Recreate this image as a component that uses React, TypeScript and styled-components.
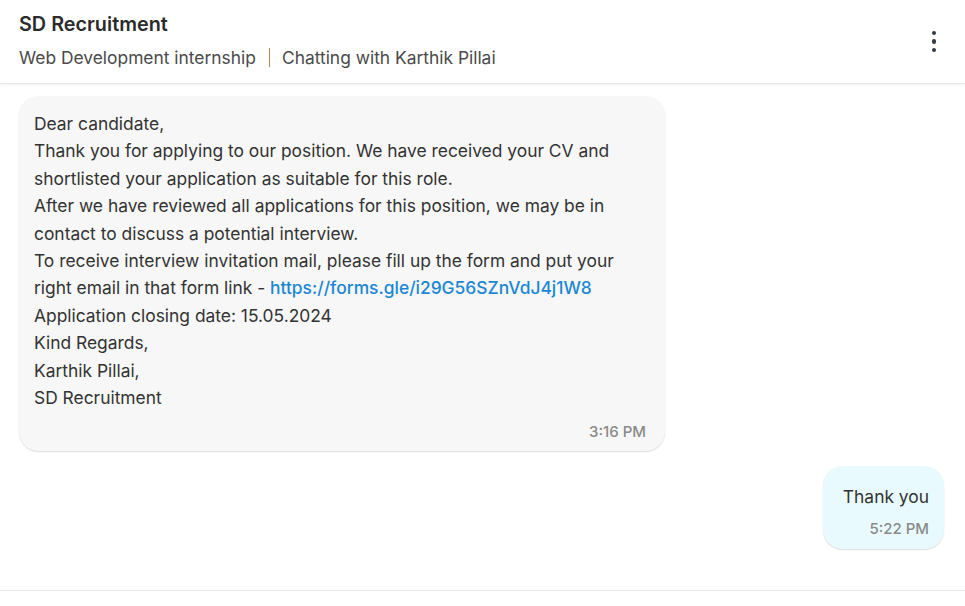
import React from "react";
import styled, { createGlobalStyle } from "styled-components";

const Global = createGlobalStyle`
  html, body { margin: 0; padding: 0; background: #ffffff; }
  body { font-family: Inter, "Noto Sans", sans-serif; color: #333333; }
  * { box-sizing: border-box; }
`;

const Page = styled.div`
  width: 965px;
  height: 606px;
  display: flex;
  flex-direction: column;
  background: #ffffff;
  overflow: hidden;
`;

const Header = styled.header`
  height: 84px;
  flex: none;
  display: flex;
  align-items: center;
  justify-content: space-between;
  padding: 0 19px 0 19px;
  border-bottom: 1px solid #e6e6e6;
  box-shadow: 0 1px 3px rgba(0, 0, 0, 0.06);
`;

const HeaderText = styled.div`
  display: flex;
  flex-direction: column;
  gap: 11px;
  margin-top: -3px;
`;

const Title = styled.h1`
  margin: 0;
  font-size: 19.8px;
  font-weight: 600;
  line-height: 24px;
  color: #2b2b2b;
`;

const Subtitle = styled.div`
  font-size: 17.4px;
  line-height: 22px;
  color: #4a4a4a;
  display: flex;
  align-items: center;
`;

const Sep = styled.span`
  display: inline-block;
  width: 1px;
  height: 19px;
  background: #b58a4c;
  margin: 0 12px 0 13px;
`;

const MenuButton = styled.button`
  border: none;
  background: transparent;
  padding: 0;
  width: 20px;
  height: 28px;
  display: flex;
  flex-direction: column;
  align-items: center;
  justify-content: center;
  gap: 4px;
  margin-right: 2px;
  cursor: pointer;
`;

const Dot = styled.span`
  width: 4.6px;
  height: 4.6px;
  border-radius: 50%;
  background: #333a44;
`;

const List = styled.main`
  height: 507px;
  flex: none;
  display: flex;
  flex-direction: column;
  gap: 15px;
  padding: 12px 21px 0 19px;
  border-bottom: 1px solid #e8e8e8;
`;

const Row = styled.div<{ $mine?: boolean }>`
  display: flex;
  justify-content: ${(p) => (p.$mine ? "flex-end" : "flex-start")};
`;

const Bubble = styled.div<{ $mine?: boolean }>`
  max-width: 646px;
  background: ${(p) => (p.$mine ? "#e8fafe" : "#f7f7f7")};
  border-radius: 20px;
  box-shadow: 0 1px 1.5px rgba(0, 0, 0, 0.14);
  padding: ${(p) => (p.$mine ? "17px 15px 11px 20px" : "14px 19px 10px 15px")};
  display: flex;
  flex-direction: column;
`;

const Body = styled.div<{ $mine?: boolean }>`
  font-size: 17.4px;
  line-height: 27.4px;
  color: #333333;
  white-space: pre-wrap;
  text-align: ${(p) => (p.$mine ? "right" : "left")};
`;

const Link = styled.a`
  color: #1b87d6;
  text-decoration: none;
  font-weight: 500;
`;

const Time = styled.div<{ $gap: number }>`
  align-self: flex-end;
  font-size: 15px;
  line-height: 18px;
  font-weight: 500;
  color: #8a8a8a;
  margin-top: ${(p) => p.$gap}px;
`;

export default function App() {
  return (
    <Page>
      <Global />
      <Header>
        <HeaderText>
          <Title>SD Recruitment</Title>
          <Subtitle>
            Web Development internship<Sep />Chatting with Karthik Pillai
          </Subtitle>
        </HeaderText>
        <MenuButton aria-label="More options">
          <Dot />
          <Dot />
          <Dot />
        </MenuButton>
      </Header>
      <List>
        <Row>
          <Bubble>
            <Body>
              {"Dear candidate,\nThank you for applying to our position. We have received your CV and shortlisted your application as suitable for this role.\nAfter we have reviewed all applications for this position, we may be in contact to discuss a potential interview.\nTo receive interview invitation mail, please fill up the form and put your right email in that form link - "}
              <Link href="#">https://forms.gle/i29G56SZnVdJ4j1W8</Link>
              {"\nApplication closing date: 15.05.2024\nKind Regards,\nKarthik Pillai,\nSD Recruitment"}
            </Body>
            <Time $gap={12}>3:16 PM</Time>
          </Bubble>
        </Row>
        <Row $mine>
          <Bubble $mine>
            <Body $mine>Thank you</Body>
            <Time $gap={9}>5:22 PM</Time>
          </Bubble>
        </Row>
      </List>
    </Page>
  );
}
